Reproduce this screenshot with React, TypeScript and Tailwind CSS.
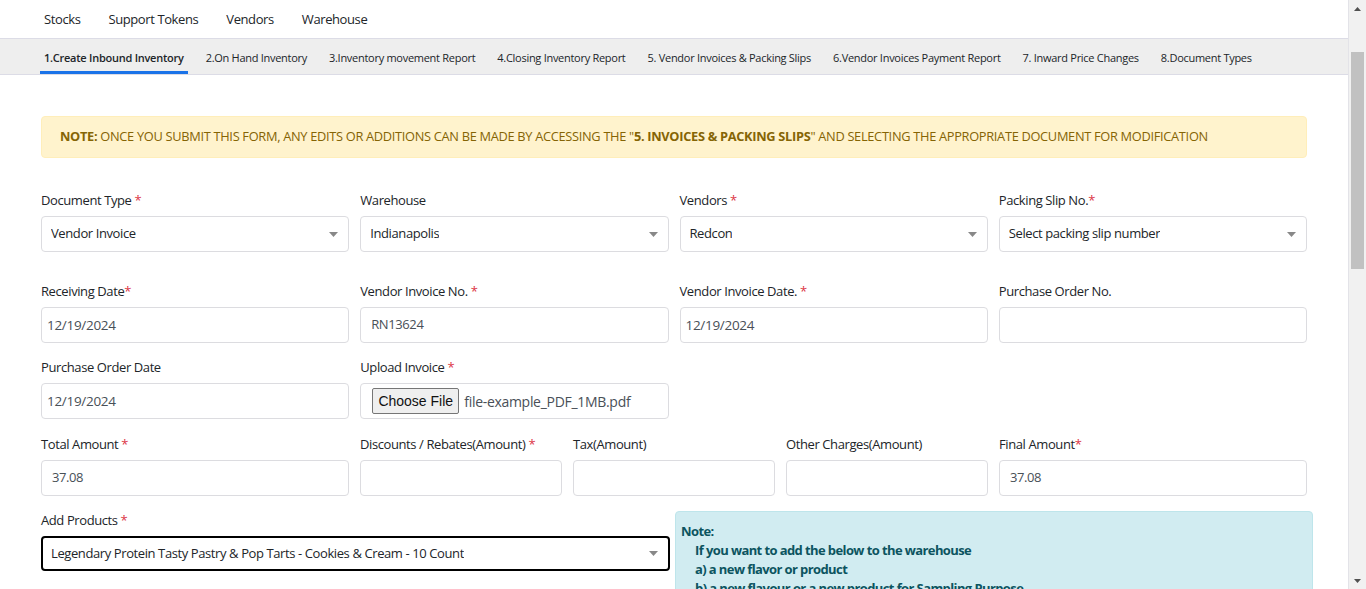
const font = { fontFamily: '"Open Sans", "Noto Sans", sans-serif' };

function Req() {
    return <span className="text-[#dc3545]"> *</span>;
}

function Label({ text, req, tight }: { text: string; req?: boolean; tight?: boolean }) {
    return (
        <div className="h-[17px] text-[13px] leading-[17px] tracking-[-0.4px] text-[#212529] whitespace-nowrap">
            {text}
            {req && (tight ? <span className="text-[#dc3545]">*</span> : <Req />)}
        </div>
    );
}

function Caret() {
    return (
        <svg width="9" height="5" viewBox="0 0 9 5" className="shrink-0">
            <path d="M0 0 L9 0 L4.5 5 Z" fill="#888" />
        </svg>
    );
}

function SelectBox({ value, dark }: { value: string; dark?: boolean }) {
    return (
        <div
            className={
                dark
                    ? 'h-[35px] mt-[7px] flex items-center justify-between pl-[8px] pr-[10px] rounded-[4px] border-2 border-black bg-white'
                    : 'h-[36px] mt-[7px] flex items-center justify-between pl-[9px] pr-[10px] rounded-[4px] border border-[#dcdce0] bg-white'
            }
        >
            <span className="text-[13px] tracking-[-0.4px] text-[#212529] truncate">{value}</span>
            <Caret />
        </div>
    );
}

function TextBox({ value, date }: { value?: string; date?: boolean }) {
    return (
        <div
            className={
                date
                    ? 'h-[36px] mt-[7px] flex items-center px-[5px] rounded-[4px] border border-[#dcdce0] bg-white'
                    : 'h-[36px] mt-[7px] flex items-center px-[10px] rounded-[4px] border border-[#dcdce0] bg-white'
            }
        >
            <span className={date ? 'text-[13.5px] tracking-[-0.3px] text-[#495057]' : 'text-[13px] tracking-[-0.4px] text-[#495057]'}>{value}</span>
        </div>
    );
}

const tabs = [
    '1.Create Inbound Inventory',
    '2.On Hand Inventory',
    '3.Inventory movement Report',
    '4.Closing Inventory Report',
    '5. Vendor Invoices & Packing Slips',
    '6.Vendor Invoices Payment Report',
    '7. Inward Price Changes',
    '8.Document Types',
];

export default function App() {
    return (
        <div className="w-[1366px] h-[589px] flex overflow-hidden bg-white" style={font}>
            <div className="w-[1349px] flex flex-col border-r border-[#e3e3e8]">
                <div className="h-[39px] shrink-0 flex items-center gap-[28px] pl-[44px] pt-[1px] border-b border-[#dcdce6] text-[13px] tracking-[-0.4px] text-[#212529]">
                    <span>Stocks</span>
                    <span>Support Tokens</span>
                    <span>Vendors</span>
                    <span>Warehouse</span>
                </div>
                <div className="h-[36px] shrink-0 flex items-stretch gap-[14px] pl-[40px] bg-[#eeeeee] border-b border-[#dcdce6]">
                    {tabs.map((t, i) => (
                        <div
                            key={i}
                            className={
                                i === 0
                                    ? 'flex items-center px-[4px] pt-[6px] text-[11px] tracking-[-0.25px] font-semibold text-[#212529] border-b-[3px] border-[#1a73e8]'
                                    : 'flex items-center px-[4px] pt-[3px] text-[11px] tracking-[-0.28px] text-[#212529]'
                            }
                        >
                            {t}
                        </div>
                    ))}
                </div>
                <div className="shrink-0 pl-[41px] pr-[41px] pt-[41px]">
                    <div className="h-[42px] flex items-center pl-[18px] rounded-[4px] bg-[#fff3cd] border border-[#ffeeba] text-[12.8px] tracking-[-0.3px] text-[#856404] whitespace-nowrap">
                        <b>NOTE:</b>&nbsp;ONCE YOU SUBMIT THIS FORM, ANY EDITS OR ADDITIONS CAN BE MADE BY ACCESSING THE "<b>5. INVOICES &amp; PACKING SLIPS</b>" AND SELECTING THE APPROPRIATE DOCUMENT FOR MODIFICATION
                    </div>

                    <div className="grid grid-cols-4 gap-x-[11px] mt-[34px]">
                        <div>
                            <Label text="Document Type" req />
                            <SelectBox value="Vendor Invoice" />
                        </div>
                        <div>
                            <Label text="Warehouse" />
                            <SelectBox value="Indianapolis" />
                        </div>
                        <div>
                            <Label text="Vendors" req />
                            <SelectBox value="Redcon" />
                        </div>
                        <div>
                            <Label text="Packing Slip No." req tight />
                            <SelectBox value="Select packing slip number" />
                        </div>
                    </div>

                    <div className="grid grid-cols-4 gap-x-[11px] mt-[31px]">
                        <div>
                            <Label text="Receiving Date" req tight />
                            <TextBox value="12/19/2024" date />
                        </div>
                        <div>
                            <Label text="Vendor Invoice No." req />
                            <TextBox value="RN13624" />
                        </div>
                        <div>
                            <Label text="Vendor Invoice Date." req />
                            <TextBox value="12/19/2024" date />
                        </div>
                        <div>
                            <Label text="Purchase Order No." />
                            <TextBox />
                        </div>
                    </div>

                    <div className="grid grid-cols-4 gap-x-[11px] mt-[16px]">
                        <div>
                            <Label text="Purchase Order Date" />
                            <TextBox value="12/19/2024" date />
                        </div>
                        <div>
                            <Label text="Upload Invoice" req />
                            <div className="h-[36px] mt-[7px] flex items-center gap-[5px] px-[11px] rounded-[4px] border border-[#dcdce0] bg-white">
                                <span
                                    className="h-[26px] w-[87px] flex items-center justify-center rounded-[2px] border border-[#767676] bg-[#efefef] text-[14px] text-[#111]"
                                    style={{ fontFamily: '"Liberation Sans", Arial, sans-serif' }}
                                >
                                    Choose File
                                </span>
                                <span className="text-[14px] tracking-[-0.3px] text-[#495057]">file-example_PDF_1MB.pdf</span>
                            </div>
                        </div>
                    </div>

                    <div className="grid grid-cols-[308px_202px_202px_202px_308px] gap-x-[11px] mt-[17px]">
                        <div>
                            <Label text="Total Amount" req />
                            <TextBox value="37.08" />
                        </div>
                        <div>
                            <Label text="Discounts / Rebates(Amount)" req />
                            <TextBox />
                        </div>
                        <div>
                            <Label text="Tax(Amount)" />
                            <TextBox />
                        </div>
                        <div>
                            <Label text="Other Charges(Amount)" />
                            <TextBox />
                        </div>
                        <div>
                            <Label text="Final Amount" req tight />
                            <TextBox value="37.08" />
                        </div>
                    </div>

                    <div className="flex gap-[5px] mt-[15px]">
                        <div className="w-[629px] shrink-0 pt-[1px]">
                            <Label text="Add Products" req />
                            <SelectBox value="Legendary Protein Tasty Pastry & Pop Tarts - Cookies & Cream - 10 Count" dark />
                        </div>
                        <div className="w-[638px] shrink-0 h-[120px] rounded-[4px] bg-[#d1ecf1] border border-[#bee5eb] pl-[5px] pt-[10px] text-[13px] leading-[19px] tracking-[-0.6px] font-bold text-[#0c5460]">
                            <div>Note:</div>
                            <div className="pl-[14px]">
                                <div>If you want to add the below to the warehouse</div>
                                <div>a) a new flavor or product</div>
                                <div>b) a new flavour or a new product for Sampling Purpose</div>
                            </div>
                        </div>
                    </div>
                </div>
            </div>
            <div className="w-[17px] flex flex-col bg-[#f1f1f1]">
                <div className="h-[17px] flex items-center justify-center">
                    <svg width="7" height="4" viewBox="0 0 7 4">
                        <path d="M0 4 L3.5 0 L7 4 Z" fill="#505050" />
                    </svg>
                </div>
                <div className="mt-[35px] mx-[2px] h-[217px] bg-[#c1c1c1]" />
                <div className="flex-1" />
                <div className="h-[17px] flex items-center justify-center">
                    <svg width="7" height="4" viewBox="0 0 7 4">
                        <path d="M0 0 L3.5 4 L7 0 Z" fill="#505050" />
                    </svg>
                </div>
            </div>
        </div>
    );
}
